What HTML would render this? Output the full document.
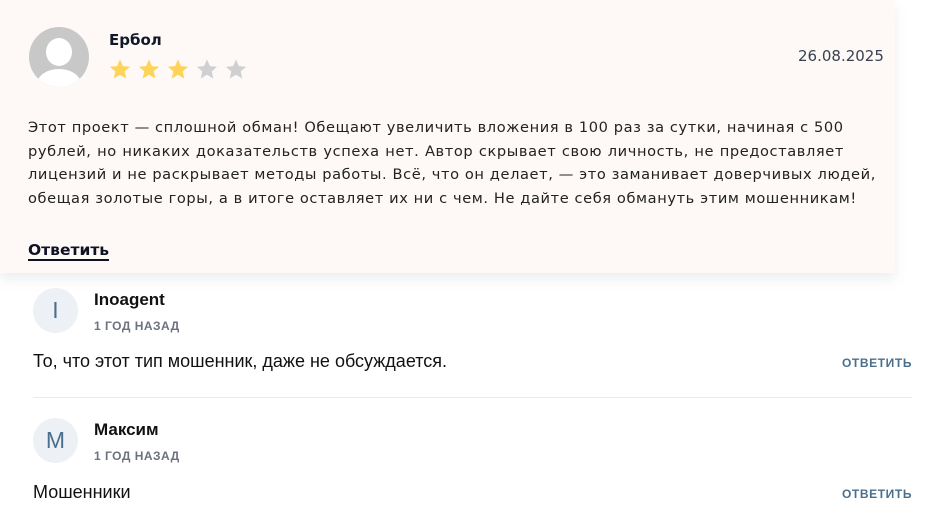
<!DOCTYPE html>
<html><head><meta charset="utf-8"><style>
*{margin:0;padding:0;box-sizing:border-box}
body{width:925px;height:516px;background:#fff;font-family:"Liberation Sans",sans-serif;position:relative;overflow:hidden}
.card{position:absolute;left:0;top:0;width:895px;height:273px;background:#fef9f6;box-shadow:0 6px 10px rgba(180,190,200,.25)}
.av{position:absolute;left:29px;top:27px;width:60px;height:60px;border-radius:50%;background:#c8c8c8;overflow:hidden}
.av .h{position:absolute;left:17px;top:11px;width:26px;height:28px;border-radius:50%;background:#fff}
.av .b{position:absolute;left:8px;top:42px;width:44px;height:30px;border-radius:50% 50% 0 0;background:#fff}
.name{position:absolute;left:109px;top:31px;font-family:"DejaVu Sans",sans-serif;font-size:15px;font-weight:bold;color:#111827}
.stars{position:absolute;left:108px;top:58px;display:flex;gap:5px}
.date{position:absolute;left:798px;top:47px;font-family:"DejaVu Sans",sans-serif;font-size:15px;color:#374151}
.txt{position:absolute;left:28px;top:116px;font-family:"DejaVu Sans",sans-serif;font-size:14.6px;line-height:23.6px;color:#222;letter-spacing:.6px}
.txt div{text-align:justify;text-align-last:justify;white-space:nowrap;overflow:visible}
.rep{position:absolute;left:28px;top:241px;font-family:"DejaVu Sans",sans-serif;font-size:15.5px;font-weight:bold;color:#0d1323;border-bottom:2px solid #0d1323;line-height:18px}
.c-av{position:absolute;width:45px;height:45px;border-radius:50%;background:#edf0f4;color:#4a6f8c;font-size:23px;text-align:center;line-height:45px}
.cn{position:absolute;left:94px;font-size:17px;font-weight:bold;color:#111}
.ct{position:absolute;left:94px;font-size:12px;font-weight:bold;color:#6b7280;letter-spacing:.5px}
.cb{position:absolute;left:33px;font-size:18px;color:#111}
.ca{position:absolute;left:842px;font-size:12px;font-weight:bold;color:#4a6f8c;letter-spacing:.6px}
.hr{position:absolute;left:33px;top:397px;width:879px;height:1px;background:#e8eaee}
</style></head><body>
<div class="card">
<div class="av"><div class="h"></div><div class="b"></div></div>
<div class="name">Ербол</div>
<div class="stars">
<svg width="24" height="23" viewBox="0 0 24 24"><path d="M12 1.5l3.1 7 7.4.6-5.6 4.9 1.7 7.4L12 17.5l-6.6 3.9 1.7-7.4L1.5 9.1l7.4-.6z" fill="#fdd35a"/></svg>
<svg width="24" height="23" viewBox="0 0 24 24"><path d="M12 1.5l3.1 7 7.4.6-5.6 4.9 1.7 7.4L12 17.5l-6.6 3.9 1.7-7.4L1.5 9.1l7.4-.6z" fill="#fdd35a"/></svg>
<svg width="24" height="23" viewBox="0 0 24 24"><path d="M12 1.5l3.1 7 7.4.6-5.6 4.9 1.7 7.4L12 17.5l-6.6 3.9 1.7-7.4L1.5 9.1l7.4-.6z" fill="#fdd35a"/></svg>
<svg width="24" height="23" viewBox="0 0 24 24"><path d="M12 1.5l3.1 7 7.4.6-5.6 4.9 1.7 7.4L12 17.5l-6.6 3.9 1.7-7.4L1.5 9.1l7.4-.6z" fill="#d0d0d2"/></svg>
<svg width="24" height="23" viewBox="0 0 24 24"><path d="M12 1.5l3.1 7 7.4.6-5.6 4.9 1.7 7.4L12 17.5l-6.6 3.9 1.7-7.4L1.5 9.1l7.4-.6z" fill="#d0d0d2"/></svg>
</div>
<div class="date">26.08.2025</div>
<div class="txt">
<div style="width:810px">Этот проект — сплошной обман! Обещают увеличить вложения в 100 раз за сутки, начиная с 500</div>
<div style="width:816px">рублей, но никаких доказательств успеха нет. Автор скрывает свою личность, не предоставляет</div>
<div style="width:842px">лицензий и не раскрывает методы работы. Всё, что он делает, — это заманивает доверчивых людей,</div>
<div style="width:822px">обещая золотые горы, а в итоге оставляет их ни с чем. Не дайте себя обмануть этим мошенникам!</div>
</div>
<div class="rep">Ответить</div>
</div>

<div class="c-av" style="left:33px;top:288px">I</div>
<div class="cn" style="top:290px">Inoagent</div>
<div class="ct" style="top:319px">1 ГОД НАЗАД</div>
<div class="cb" style="top:351px">То, что этот тип мошенник, даже не обсуждается.</div>
<div class="ca" style="top:356px">ОТВЕТИТЬ</div>
<div class="hr"></div>
<div class="c-av" style="left:33px;top:418px">M</div>
<div class="cn" style="top:420px">Максим</div>
<div class="ct" style="top:449px">1 ГОД НАЗАД</div>
<div class="cb" style="top:482px">Мошенники</div>
<div class="ca" style="top:487px">ОТВЕТИТЬ</div>
</body></html>
